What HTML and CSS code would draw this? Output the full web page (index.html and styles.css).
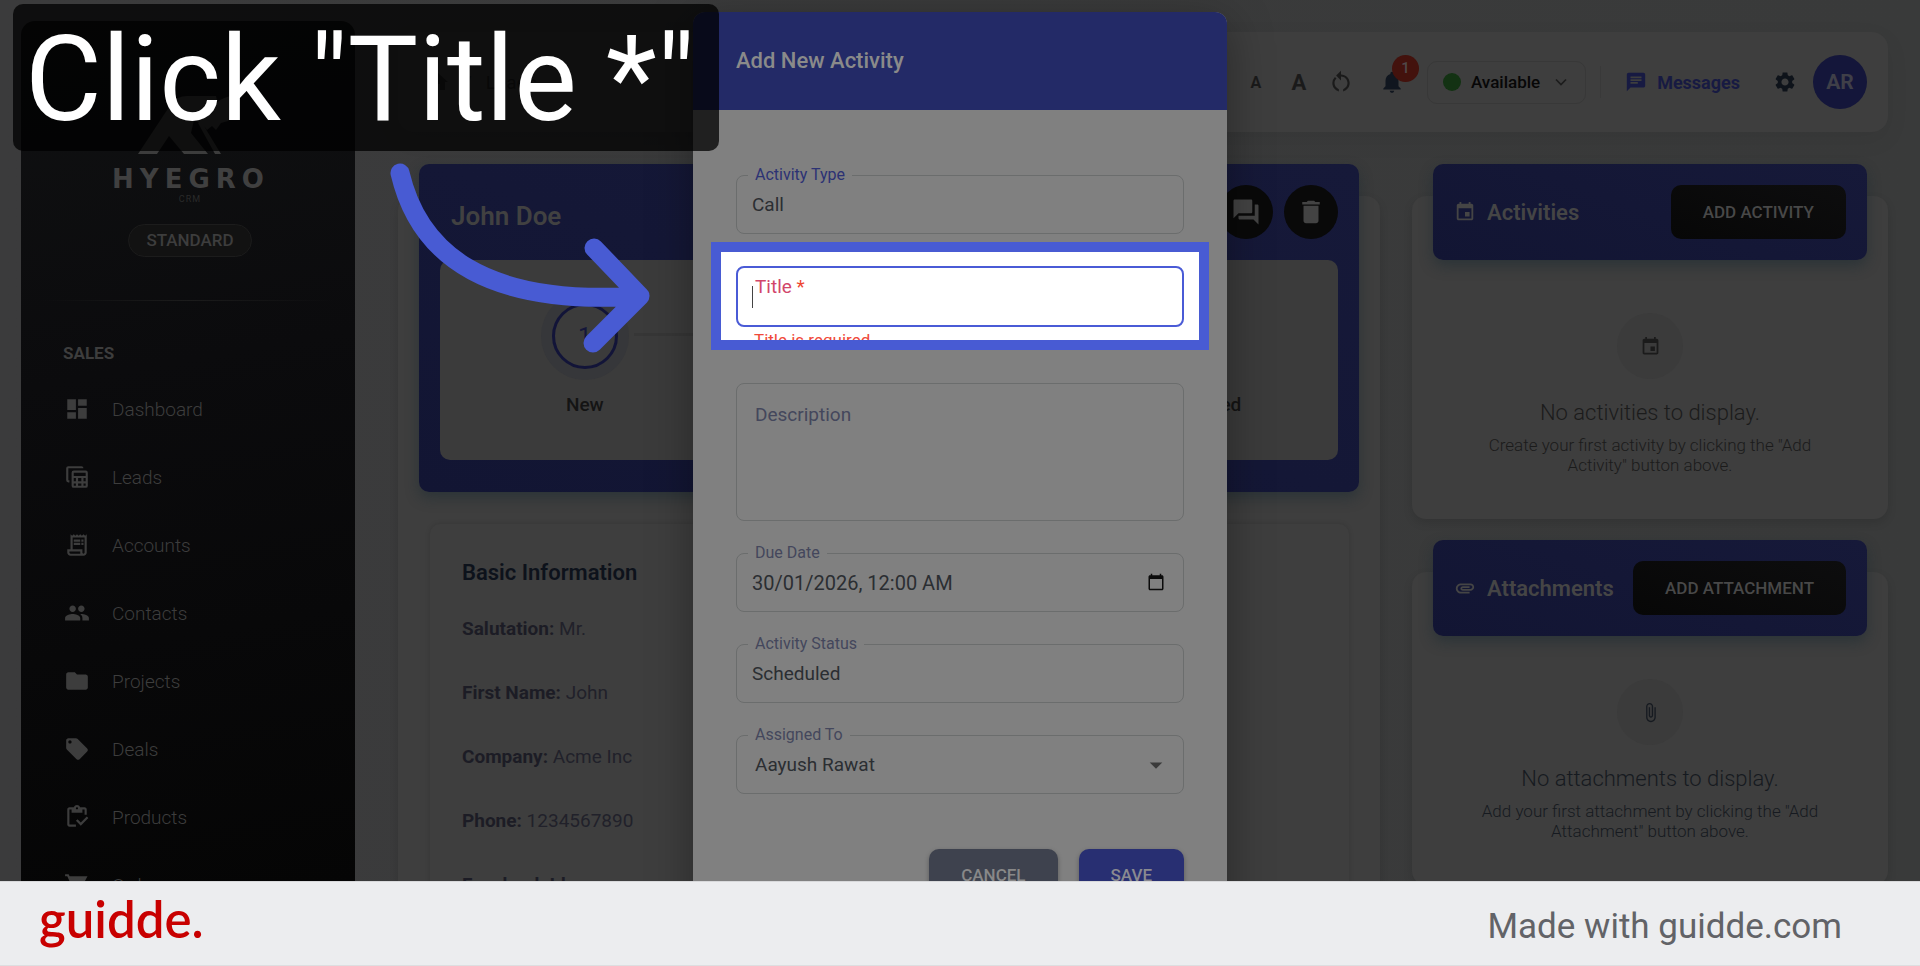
FILE: index.html
```html
<!DOCTYPE html>
<html lang="en">
<head>
<meta charset="utf-8">
<title>Hyegro CRM – Add New Activity</title>
<link rel="stylesheet" href="styles.css">
</head>
<body>
<div class="stage">
  <aside class="sidebar">
    <div class="brand">
      <svg class="brand-mark" viewBox="0 0 104 60" width="104" height="60" aria-hidden="true">
        <path d="M0 59 33 9Q39 1 49 1H78Q80 7 77 14L63 28 56 25 53 38 70 59H46L31 41 19 59Z"/>
        <path d="M74 14Q80 2 98 0 102 15 90 26L83 28 78 35 74 31 69 35 66 31 83 59H77L60 28Z"/>
      </svg>
      <div class="brand-name">HYEGRO</div>
      <div class="brand-sub">CRM</div>
      <span class="plan">STANDARD</span>
    </div>
    <hr class="rule">
    <h2 class="nav-title">SALES</h2>
    <nav class="nav">
      <a href="#"><svg viewBox="0 0 24 24"><path d="M3 13h8V3H3v10zm0 8h8v-6H3v6zm10 0h8V11h-8v10zm0-18v6h8V3h-8z"/></svg>Dashboard</a>
      <a href="#"><svg viewBox="0 0 24 24"><path d="M5 17H4a2 2 0 0 1-2-2V4a2 2 0 0 1 2-2h12a2 2 0 0 1 2 2H4v11h1zM20 6H9a2 2 0 0 0-2 2v12a2 2 0 0 0 2 2h11a2 2 0 0 0 2-2V8a2 2 0 0 0-2-2zm0 2v3H9V8zm-7 8v-3h3v3zm3 2v2h-3v-2zm-5-2H9v-3h2zm7-3h2v3h-2zm-9 5h2v2H9zm9 2v-2h2v2z"/></svg>Leads</a>
      <a href="#"><svg viewBox="0 0 24 24"><path d="M19.500 3.500 18 2l-1.500 1.500L15 2l-1.500 1.500L12 2l-1.500 1.500L9 2 7.500 3.500 6 2v14H3v3c0 1.660 1.340 3 3 3h12c1.660 0 3-1.340 3-3V2zM15 20H6c-.55 0-1-.45-1-1v-1h10zm4-1c0 .55-.45 1-1 1s-1-.45-1-1v-3H8V5h11zM9 7h6v2H9zm7 0h2v2h-2zm-7 3h6v2H9zm7 0h2v2h-2z"/></svg>Accounts</a>
      <a href="#"><svg viewBox="0 0 24 24"><path d="M16 11c1.660 0 2.990-1.340 2.990-3S17.660 5 16 5s-3 1.340-3 3 1.340 3 3 3zm-8 0c1.660 0 2.990-1.340 2.990-3S9.660 5 8 5 5 6.340 5 8s1.340 3 3 3zm0 2c-2.330 0-7 1.170-7 3.500V19h14v-2.500C15 14.170 10.330 13 8 13zm8 0c-.29 0-.62.020-.97.050 1.160.84 1.970 1.970 1.970 3.450V19h6v-2.500c0-2.330-4.670-3.500-7-3.500z"/></svg>Contacts</a>
      <a href="#"><svg viewBox="0 0 24 24"><path d="M10 4H4c-1.100 0-2 .9-2 2v12c0 1.100.9 2 2 2h16c1.100 0 2-.9 2-2V8c0-1.100-.9-2-2-2h-8z"/></svg>Projects</a>
      <a href="#"><svg viewBox="0 0 24 24"><path d="m21.410 11.580-9-9C12.050 2.220 11.550 2 11 2H4c-1.100 0-2 .9-2 2v7c0 .55.22 1.050.59 1.420l9 9c.36.36.86.58 1.410.58s1.050-.22 1.410-.59l7-7c.37-.36.59-.86.59-1.410s-.23-1.060-.59-1.420zM5.500 7C4.670 7 4 6.330 4 5.500S4.670 4 5.500 4 7 4.670 7 5.500 6.330 7 5.500 7z"/></svg>Deals</a>
      <a href="#"><svg viewBox="0 0 24 24"><path d="M5 5h2v3h10V5h2v5h2V5c0-1.100-.9-2-2-2h-4.180C14.400 1.840 13.300 1 12 1s-2.400.84-2.820 2H5c-1.100 0-2 .9-2 2v14c0 1.100.9 2 2 2h6v-2H5zm7-2c.55 0 1 .45 1 1s-.45 1-1 1-1-.45-1-1 .45-1 1-1zM21 11.500 15.510 17l-3.010-3-1.500 1.500 4.510 4.500 6.990-7z"/></svg>Products</a>
      <a href="#"><svg viewBox="0 0 24 24"><path d="M7 18c-1.100 0-2 .9-2 2s.9 2 2 2 2-.9 2-2-.9-2-2-2zM1 2v2h2l3.600 7.590-1.350 2.450C4.520 15.370 5.480 17 7 17h12v-2H7l1.100-2h7.450c.75 0 1.410-.41 1.750-1.030L21.700 4H5.210l-.94-2zm16 16c-1.100 0-2 .9-2 2s.9 2 2 2 2-.9 2-2-.9-2-2-2z"/></svg>Orders</a>
    </nav>
  </aside>

  <div class="main">
    <header class="topbar">
      <nav class="crumbs"><svg viewBox="0 0 24 24"><path d="M10 20v-6h4v6h5v-8h3L12 3 2 12h3v8z"/></svg><span>/</span><a href="#">Leads</a></nav>
      <div class="tools">
        <button class="tool font-small" aria-label="Smaller text">A</button>
        <button class="tool font-big" aria-label="Larger text">A</button>
        <button class="tool" aria-label="Reset text size"><svg viewBox="0 0 24 24"><path d="M12 5V1.500L7.500 6 12 10.500V7c3.300 0 6 2.700 6 6 0 2.600-1.600 4.700-4 5.600v2.100c3.500-.9 6-4 6-7.700 0-4.400-3.600-8-8-8zM6 13c0-1.600.7-3.100 1.800-4.200L6.400 7.300A8 8 0 0 0 4 13c0 3.700 2.500 6.800 6 7.700v-2.100C7.600 17.700 6 15.500 6 13z"/></svg></button>
        <button class="tool bell" aria-label="Notifications"><svg viewBox="0 0 24 24"><path d="M12 22c1.100 0 2-.9 2-2h-4c0 1.100.9 2 2 2zm6-6v-5c0-3.070-1.630-5.640-4.500-6.320V4c0-.83-.67-1.500-1.500-1.500s-1.500.67-1.500 1.500v.68C7.640 5.360 6 7.920 6 11v5l-2 2v1h16v-1z"/></svg><span class="badge">1</span></button>
        <button class="status"><span class="dot"></span>Available<svg viewBox="0 0 24 24"><path d="m6 9 6 6 6-6"/></svg></button>
        <span class="divider"></span>
        <a class="messages" href="#"><svg viewBox="0 0 24 24"><path d="M20 2H4c-1.100 0-2 .9-2 2v18l4-4h14c1.100 0 2-.9 2-2V4c0-1.100-.9-2-2-2zM6 9h12v2H6zm8 5H6v-2h8zm4-6H6V6h12z"/></svg>Messages</a>
        <button class="tool gear" aria-label="Settings"><svg viewBox="0 0 24 24"><path d="M19.140 12.940c.04-.3.060-.61.060-.94 0-.32-.02-.64-.07-.94l2.030-1.580c.18-.14.23-.41.12-.61l-1.920-3.320c-.12-.22-.37-.29-.59-.22l-2.390.96c-.5-.38-1.030-.7-1.620-.94l-.36-2.540c-.04-.24-.24-.41-.48-.41h-3.840c-.24 0-.43.17-.47.41l-.36 2.540c-.59.24-1.130.57-1.620.94l-2.390-.96c-.22-.08-.47 0-.59.22L2.740 8.870c-.12.21-.08.47.12.61l2.030 1.580c-.05.3-.09.63-.09.94s.02.64.070.94l-2.030 1.580c-.18.14-.23.41-.12.61l1.920 3.320c.12.22.37.29.59.22l2.390-.96c.5.38 1.030.7 1.620.94l.36 2.540c.05.24.24.41.48.41h3.840c.24 0 .44-.17.47-.41l.36-2.540c.59-.24 1.130-.56 1.620-.94l2.390.96c.22.08.47 0 .59-.22l1.920-3.320c.12-.22.070-.47-.12-.61zM12 15.600c-1.980 0-3.600-1.620-3.600-3.600s1.620-3.600 3.600-3.600 3.600 1.620 3.600 3.600-1.620 3.600-3.600 3.600z"/></svg></button>
        <button class="avatar">AR</button>
      </div>
    </header>

    <div class="columns">
      <section class="panel lead">
        <div class="lead-card">
          <div class="lead-head">
            <h1>John Doe</h1>
            <div class="lead-actions">
              <button aria-label="Conversation"><svg viewBox="0 0 24 24"><path d="M21 6h-2v9H6v2c0 .55.45 1 1 1h11l4 4V7c0-.55-.45-1-1-1zm-4 6V3c0-.55-.45-1-1-1H3c-.55 0-1 .45-1 1v14l4-4h10c.55 0 1-.45 1-1z"/></svg></button>
              <button aria-label="Delete"><svg viewBox="0 0 24 24"><path d="M6 19c0 1.100.9 2 2 2h8c1.100 0 2-.9 2-2V7H6zM19 4h-3.500l-1-1h-5l-1 1H5v2h14z"/></svg></button>
            </div>
          </div>
          <ol class="steps">
            <li><span class="step-dot">1</span>New</li>
            <li class="step-middle"></li>
            <li class="step-last">Unqualified</li>
          </ol>
        </div>
        <div class="info">
          <h2>Basic Information</h2>
          <p><b>Salutation:</b> Mr.</p>
          <p><b>First Name:</b> John</p>
          <p><b>Company:</b> Acme Inc</p>
          <p><b>Phone:</b> 1234567890</p>
          <p><b>Facebook Id:</b></p>
        </div>
      </section>

      <div class="side">
        <section class="panel">
          <div class="panel-head">
            <svg viewBox="0 0 24 24"><path d="M17 12h-5v5h5zM16 1v2H8V1H6v2H5c-1.110 0-1.990.9-1.990 2L3 19c0 1.100.89 2 2 2h14c1.100 0 2-.9 2-2V5c0-1.100-.9-2-2-2h-1V1zm3 18H5V8h14z"/></svg>
            <h2>Activities</h2>
            <button>ADD ACTIVITY</button>
          </div>
          <div class="empty">
            <span class="empty-icon"><svg viewBox="0 0 24 24"><path d="M17 12h-5v5h5zM16 1v2H8V1H6v2H5c-1.110 0-1.990.9-1.990 2L3 19c0 1.100.89 2 2 2h14c1.100 0 2-.9 2-2V5c0-1.100-.9-2-2-2h-1V1zm3 18H5V8h14z"/></svg></span>
            <h3>No activities to display.</h3>
            <p>Create your first activity by clicking the "Add Activity" button above.</p>
          </div>
        </section>
        <section class="panel">
          <div class="panel-head">
            <svg viewBox="0 0 24 24"><path d="M2 12.500C2 9.460 4.460 7 7.500 7H18c2.210 0 4 1.790 4 4s-1.790 4-4 4H9.500C8.120 15 7 13.880 7 12.500S8.120 10 9.500 10H17v2H9.410c-.55 0-.55 1 0 1H18c1.100 0 2-.9 2-2s-.9-2-2-2H7.500C5.570 9 4 10.570 4 12.500S5.570 16 7.500 16H17v2H7.500C4.460 18 2 15.540 2 12.500z"/></svg>
            <h2>Attachments</h2>
            <button>ADD ATTACHMENT</button>
          </div>
          <div class="empty tinted">
            <span class="empty-icon"><svg viewBox="0 0 24 24"><path d="M16.500 6v11.500c0 2.210-1.790 4-4 4s-4-1.790-4-4V5c0-1.380 1.120-2.500 2.500-2.500s2.500 1.120 2.500 2.500v10.500c0 .55-.45 1-1 1s-1-.45-1-1V6H10v9.500c0 1.380 1.120 2.500 2.500 2.500s2.500-1.120 2.500-2.500V5c0-2.210-1.790-4-4-4S7 2.790 7 5v12.500c0 3.040 2.460 5.500 5.500 5.500s5.500-2.460 5.500-5.500V6z"/></svg></span>
            <h3>No attachments to display.</h3>
            <p>Add your first attachment by clicking the "Add Attachment" button above.</p>
          </div>
        </section>
      </div>
    </div>
  </div>

  <form class="modal">
    <h2 class="modal-title">Add New Activity</h2>
    <div class="modal-body">
      <div class="field active"><label for="type">Activity Type</label><input id="type" type="text" value="Call"></div>
      <div class="spotlight">
        <div class="field title-field"><label for="title">Title <i>*</i></label><input id="title" type="text"><span class="caret"></span></div>
        <p class="error">Title is required</p>
      </div>
      <div class="field area"><label for="desc">Description</label><textarea id="desc"></textarea></div>
      <div class="field date"><label for="due">Due Date</label><input id="due" type="text" value="30/01/2026, 12:00 AM"><svg class="calendar" viewBox="0 0 24 24"><path d="M20 3h-1V1h-2v2H7V1H5v2H4c-1.100 0-2 .9-2 2v16c0 1.100.9 2 2 2h16c1.100 0 2-.9 2-2V5c0-1.100-.9-2-2-2zm0 18H4V8h16z"/></svg></div>
      <div class="field"><label for="status">Activity Status</label><input id="status" type="text" value="Scheduled"></div>
      <div class="field"><label for="owner">Assigned To</label><select id="owner"><option>Aayush Rawat</option></select><svg class="drop" viewBox="0 0 24 24"><path d="m7 10 5 5 5-5z"/></svg></div>
      <div class="modal-actions">
        <button type="button" class="cancel">CANCEL</button>
        <button type="button" class="save">SAVE</button>
      </div>
    </div>
  </form>

  <div class="callout">Click "Title *"</div>
  <svg class="arrow" viewBox="0 0 270 200" width="270" height="200" aria-hidden="true">
    <path d="M10 13C28 90 90 147 250 136M204 88 250 136 203 183"/>
  </svg>
</div>
<footer class="footer">
  <div class="guidde">guidde.</div>
  <div class="made">Made with guidde.com</div>
</footer>
</body>
</html>
```

FILE: styles.css
```css
* { box-sizing: border-box; }
body {
  margin: 0;
  height: 100vh;
  display: flex;
  flex-direction: column;
  overflow: hidden;
  background: #3a3a3a;
  font-family: Roboto, "Liberation Sans", sans-serif;
}
h1, h2, h3, p, ol { margin: 0; padding: 0; }
button, input, select, textarea { font: inherit; border: 0; background: none; padding: 0; }
a { color: inherit; text-decoration: none; }
svg { fill: currentColor; flex: none; }

.stage {
  position: relative;
  flex: 1;
  min-height: 0;
  overflow: hidden;
  display: flex;
  align-items: flex-start;
  gap: 43px;
  padding: 21px 32px 0 21px;
  background: linear-gradient(90deg, #3b3b3c, #393a3a);
}

/* Sidebar */
.sidebar {
  flex: none;
  width: 334px;
  height: 100%;
  padding: 74px 20px 0;
  overflow: hidden;
  border-radius: 14px 14px 0 0;
  background: linear-gradient(170deg, #101112, #0b0b0d 40%, #050505);
  color: #3d3d3d;
}
.brand { display: flex; flex-direction: column; align-items: center; padding-left: 4px; }
.brand-mark { color: #3c3c3c; }
.brand-name {
  margin-top: 10px;
  padding-left: 2px;
  font: 700 26px/28px "DejaVu Sans", sans-serif;
  letter-spacing: 6px;
  color: #404040;
}
.brand-sub { font-size: 9px; line-height: 12px; letter-spacing: 1px; color: #2a2a2a; }
.plan {
  margin-top: 19px;
  padding: 0 17px;
  border: 1px solid #1c1c1c;
  border-radius: 17px;
  background: #121212;
  font-size: 17px;
  font-weight: 500;
  line-height: 31px;
}
.rule { margin: 43px 0 0; border: 0; height: 1px; background: linear-gradient(90deg, transparent, #1c1c1c, transparent); }
.nav-title { margin: 42px 0 12px 22px; font-size: 17px; font-weight: 700; line-height: 20px; }
.nav a {
  display: flex;
  align-items: center;
  gap: 22px;
  height: 68px;
  padding-left: 23px;
  font-size: 19px;
  font-weight: 300;
}
.nav svg { width: 26px; height: 26px; }

/* Top bar */
.main { flex: 1; min-width: 0; padding-top: 11px; }
.topbar {
  display: flex;
  align-items: center;
  justify-content: space-between;
  height: 100px;
  padding: 0 21px 0 28px;
  border-radius: 16px;
  background: #3e3e3e;
  box-shadow: 0 8px 24px rgba(0, 0, 0, .06);
}
.crumbs { display: flex; align-items: center; gap: 14px; color: #222; font-size: 19px; }
.crumbs svg { width: 24px; }
.tools { display: flex; align-items: center; color: #1c1c1c; }
.tool { display: grid; place-items: center; color: #1a1a1a; font-weight: 700; }
.tool svg { width: 26px; height: 26px; }
.font-small { width: 24px; font-size: 16px; }
.font-big { width: 24px; margin-left: 19px; font-size: 22px; }
.font-big + .tool { margin-left: 17px; }
.bell { position: relative; margin-left: 25px; color: #10161f; }
.badge {
  position: absolute;
  left: 13px;
  top: -14px;
  width: 27px;
  height: 27px;
  border-radius: 50%;
  background: #43120d;
  color: #504848;
  font-size: 15px;
  font-weight: 500;
  line-height: 27px;
  text-align: center;
}
.status {
  display: flex;
  align-items: center;
  margin-left: 22px;
  height: 43px;
  padding: 0 14px 0 15px;
  border: 1px solid #383838;
  border-radius: 10px;
  color: #070707;
  font-size: 17px;
  font-weight: 500;
}
.status svg { width: 20px; margin-left: 11px; fill: none; stroke: #1c1c1c; stroke-width: 2; }
.dot { width: 18px; height: 18px; margin-right: 10px; border-radius: 50%; background: #133213; }
.divider { width: 1px; height: 32px; margin-left: 14px; background: #393939; }
.messages { display: flex; align-items: center; gap: 10px; margin-left: 24px; color: #171a42; font-size: 18px; font-weight: 700; }
.messages svg { width: 22px; }
.gear { margin-left: 33px; color: #0e131a; }
.gear svg { width: 24px; height: 24px; }
.avatar { width: 54px; height: 54px; margin-left: 16px; border-radius: 50%; background: #14163a; color: #3f3f48; font-size: 21px; font-weight: 700; }

/* Content columns */
.columns { display: grid; grid-template-columns: minmax(0, 1fr) 476px; gap: 32px; margin-top: 64px; align-items: start; }
.panel { padding: 0 21px; border-radius: 14px; background: #3e3e3e; box-shadow: 0 4px 10px rgba(0, 0, 0, .12); }
.side { display: grid; gap: 53px; }
.lead-card, .panel-head {
  margin-top: -32px;
  border-radius: 10px;
  background: linear-gradient(200deg, #161939, #121533);
  box-shadow: 0 6px 14px rgba(22, 40, 48, .45);
}
.lead-card { padding: 0 21px 32px; min-height: 328px; }
.lead-head { display: flex; align-items: center; justify-content: space-between; height: 96px; padding-left: 11px; color: #414141; }
.lead-head h1 { padding-top: 8px; font-size: 26px; font-weight: 600; }
.lead-actions { display: flex; gap: 11px; }
.lead-actions button { display: grid; place-items: center; width: 54px; height: 54px; border-radius: 50%; background: #090909; color: #434343; }
.lead-actions svg { width: 30px; height: 30px; }
.steps {
  display: flex;
  height: 200px;
  list-style: none;
  border-radius: 10px;
  background: #3b3b3b;
  color: #141414;
  font-size: 19px;
  font-weight: 500;
}
.steps li { flex: 10; display: flex; flex-direction: column; align-items: center; padding-top: 43px; }
.steps .step-middle { flex: 11; padding-top: 73px; }
.step-middle::before { content: ""; width: 80%; margin-left: -80%; height: 3px; background: #363636; }
.steps .step-last { padding-top: 133px; }
.step-dot {
  width: 66px;
  height: 66px;
  margin-bottom: 24px;
  border: 3px solid #121438;
  border-radius: 50%;
  box-shadow: 0 0 0 11px #36373a;
  color: #14163a;
  font-size: 24px;
  font-weight: 400;
  line-height: 60px;
  text-align: center;
}
.info {
  margin: 32px 10px 0 11px;
  padding: 36px 32px 0;
  min-height: 420px;
  border-radius: 10px;
  box-shadow: 0 0 5px rgba(0, 0, 0, .15);
  color: #21212a;
  font-size: 19px;
  line-height: 24px;
}
.info h2 { margin-bottom: 31px; color: #0d121b; font-size: 22px; font-weight: 600; line-height: 26px; }
.info p { height: 64px; }
.info b { font-weight: 700; color: #1c1c25; }

.panel-head { display: flex; align-items: center; height: 96px; padding: 0 21px; color: #454545; }
.panel-head svg { width: 22px; height: 22px; }
.panel-head h2 { margin-left: 11px; font-size: 22px; font-weight: 600; }
.panel-head button {
  height: 54px;
  margin-left: auto;
  padding: 0 32px;
  border-radius: 10px;
  background: linear-gradient(20deg, #070707, #0d0d0e);
  color: #484848;
  font-size: 17px;
  font-weight: 500;
}
.empty { display: flex; flex-direction: column; align-items: center; padding: 53px 42px 44px; color: #1b1b1b; text-align: center; }
.tinted { padding-top: 43px; color: #161a20; }
.empty-icon { display: grid; place-items: center; width: 66px; height: 66px; border-radius: 50%; background: #3b3b3b; }
.empty-icon svg { width: 21px; height: 21px; }
.empty h3 { margin-top: 20px; font-size: 22px; font-weight: 300; line-height: 28px; }
.empty p { margin-top: 8px; font-size: 17px; font-weight: 300; line-height: 20px; }

/* Dialog */
.modal {
  position: absolute;
  top: 12px;
  left: 50%;
  width: 534px;
  margin-left: -267px;
  border-radius: 12px;
  background: #808080;
  box-shadow: 0 11px 45px rgba(0, 0, 0, .35);
}
.modal-title { height: 98px; padding: 36px 43px; border-radius: 12px 12px 0 0; background: #232a67; color: #8a8a8a; font-size: 22px; font-weight: 500; line-height: 26px; }
.modal-body { padding: 65px 43px 43px; }
.field { position: relative; height: 59px; border: 1px solid #6b6d6d; border-radius: 8px; margin-bottom: 32px; font-size: 19px; color: #2b2e32; }
.field label { position: absolute; left: 11px; top: -11px; padding: 0 7px; background: #808080; color: #44475c; font-size: 16px; line-height: 20px; }
.field input, .field select { display: block; width: 100%; height: 57px; padding: 0 15px; color: inherit; outline: 0; }
.field select { appearance: none; padding-left: 18px; opacity: 1; }
.field.active { margin-bottom: 8px; }
.active label { color: #2c3274; }
.spotlight { height: 108px; margin: 0 -25px 33px; padding: 14px 15px 0; border: 10px solid #485bd3; background: #fff; overflow: hidden; }
.spotlight .title-field { height: 61px; border: 2px solid #4a5bd6; margin: 0; color: #333; }
.title-field label { top: 8px; left: 10px; background: none; color: #d2466a; font-size: 19px; line-height: 22px; }
.title-field i { color: #ee4630; font-style: normal; }
.caret { position: absolute; left: 14px; top: 18px; width: 1px; height: 22px; background: #444; }
.error { margin: 3px 18px 0; color: #f0493a; font-size: 17px; line-height: 20px; }
.area { height: 138px; }
.area label { top: 19px; font-size: 19px; line-height: 24px; }
.area textarea { display: block; width: 100%; height: 136px; resize: none; outline: 0; padding: 20px 18px; }
.date { font-size: 20px; }
.calendar, .drop { position: absolute; right: 18px; top: 19px; width: 18px; height: 18px; color: #0b0b0b; }
.drop { right: 12px; top: 14px; width: 30px; height: 30px; color: #3a3a3a; }
.modal-actions { display: flex; justify-content: flex-end; gap: 21px; padding-top: 23px; }
.modal-actions button { height: 52px; padding: 0 32px; border-radius: 10px; font-size: 17px; font-weight: 500; box-shadow: 0 2px 5px rgba(0, 0, 0, .3); }
.cancel { background: #3e424e; color: #888; }
.save { background: #282f72; color: #8a8a90; }

/* Guide overlay */
.callout {
  position: absolute;
  left: 13px;
  top: 4px;
  width: 706px;
  height: 147px;
  padding-left: 12px;
  border-radius: 10px;
  background: rgba(0, 0, 0, .75);
  color: #fff;
  font: 400 118px/152px Roboto, sans-serif;
  white-space: nowrap;
}
.arrow { position: absolute; left: 390px; top: 160px; }
.arrow path { fill: none; stroke: #485bd3; stroke-width: 19; stroke-linecap: round; stroke-linejoin: round; }
.footer {
  flex: none;
  display: flex;
  align-items: center;
  justify-content: space-between;
  height: 85px;
  padding: 0 78px 0 39px;
  border-top: 1px solid #d8d9db;
  border-bottom: 1px solid #dddee0;
  background: #ecedef;
  color: #626367;
  font-size: 35px;
}
.made { padding-top: 5px; }
.guidde { color: #c80000; font: 600 51px/60px Lato, sans-serif; padding-bottom: 10px; }
```
